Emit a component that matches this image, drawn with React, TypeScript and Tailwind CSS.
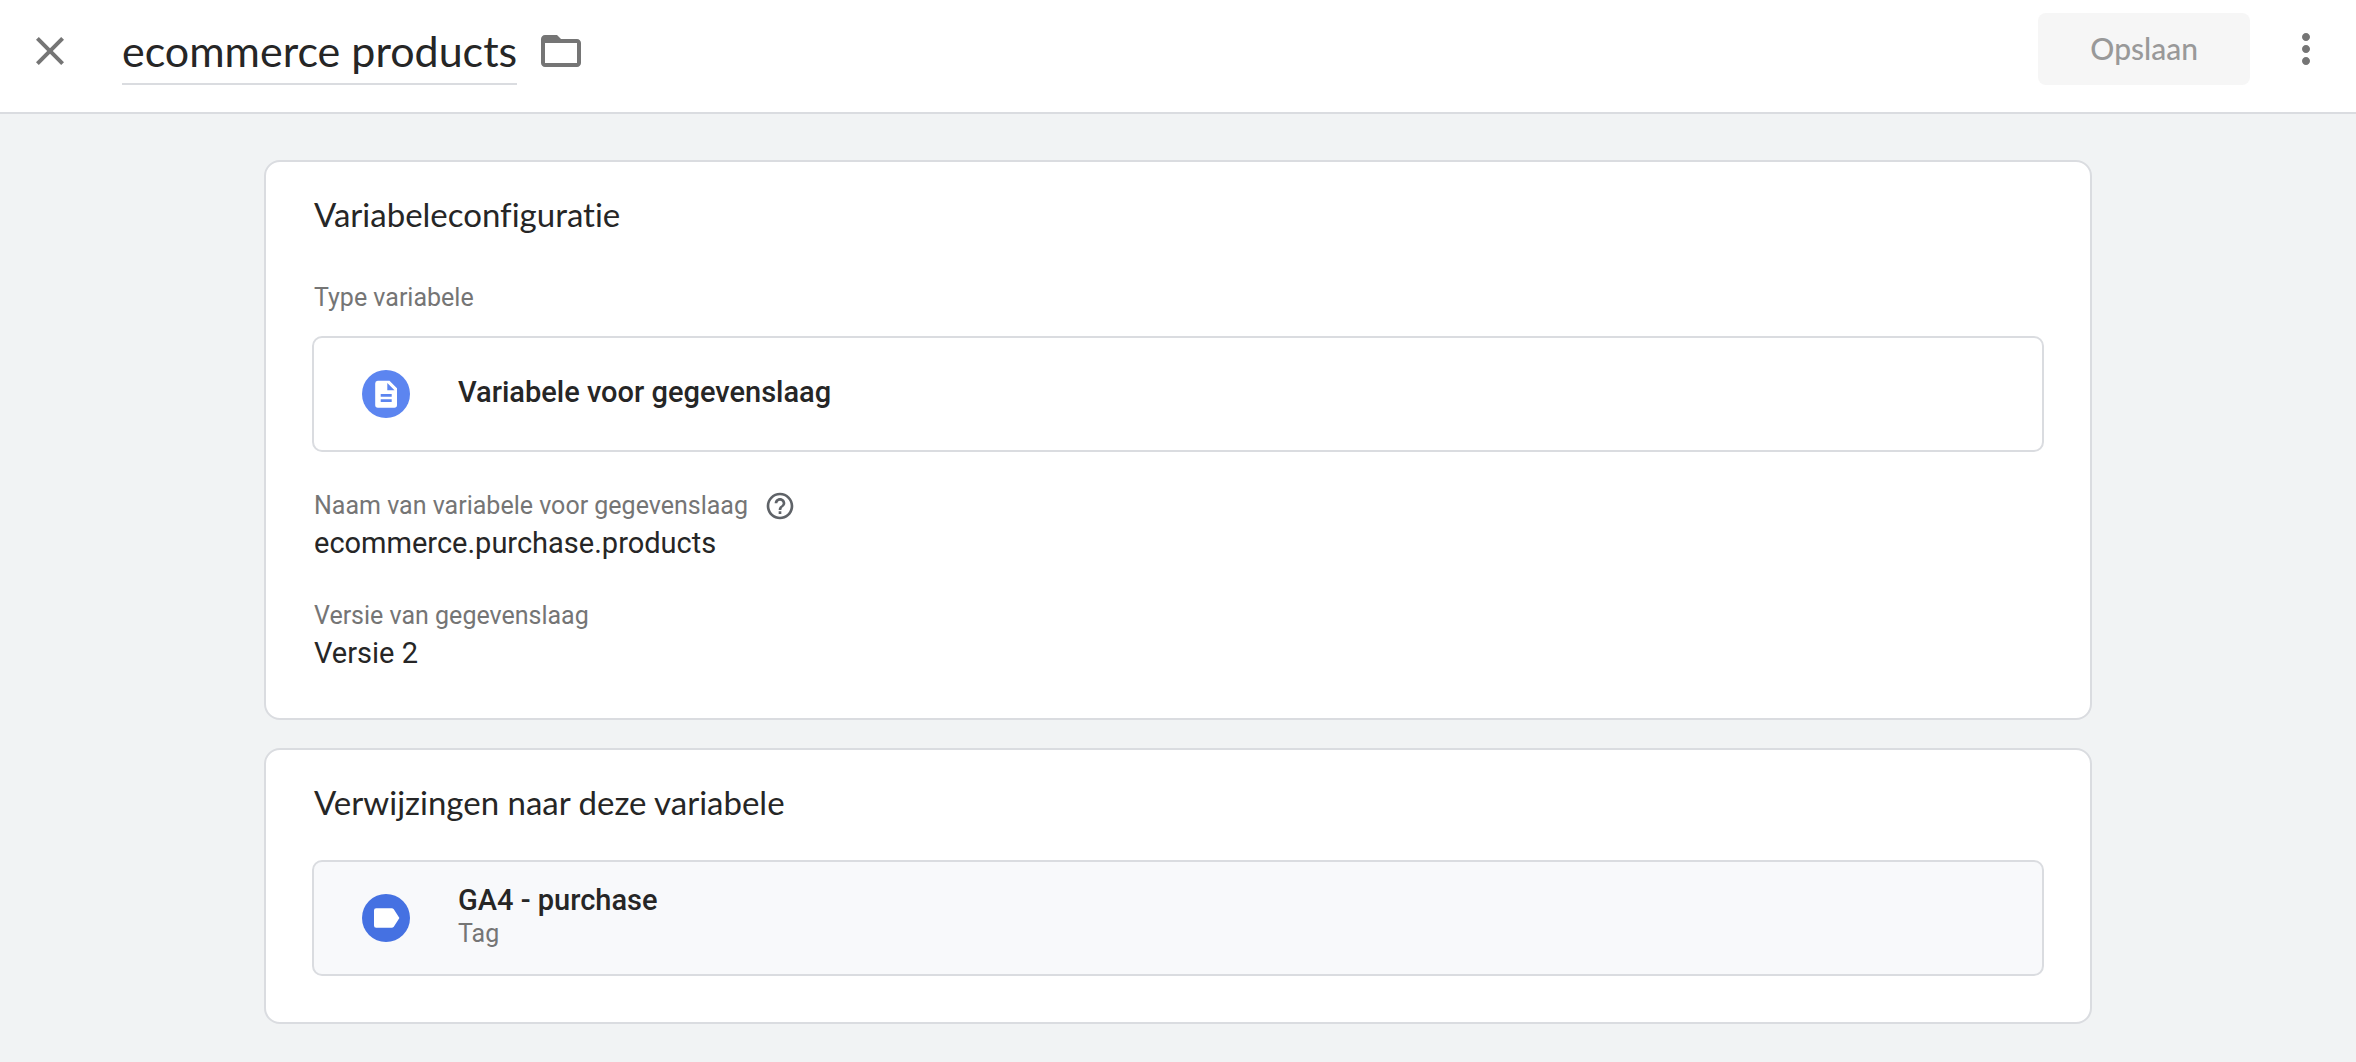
import { useState, type ReactNode } from 'react';

const CLOSE = 'M19 6.41L17.59 5 12 10.59 6.41 5 5 6.41 10.59 12 5 17.59 6.41 19 12 13.41 17.59 19 19 17.59 13.41 12z';
const FOLDER =
  'M20 6h-8l-2-2H4c-1.1 0-1.99.9-1.99 2L2 18c0 1.1.9 2 2 2h16c1.1 0 2-.9 2-2V8c0-1.1-.9-2-2-2zm0 12H4V8h16v10z';
const MORE =
  'M12 8c1.1 0 2-.9 2-2s-.9-2-2-2-2 .9-2 2 .9 2 2 2zm0 2c-1.1 0-2 .9-2 2s.9 2 2 2 2-.9 2-2-.9-2-2-2zm0 6c-1.1 0-2 .9-2 2s.9 2 2 2 2-.9 2-2-.9-2-2-2z';
const HELP =
  'M11 18h2v-2h-2v2zm1-16C6.48 2 2 6.48 2 12s4.48 10 10 10 10-4.48 10-10S17.52 2 12 2zm0 18c-4.41 0-8-3.59-8-8s3.59-8 8-8 8 3.59 8 8-3.59 8-8 8zm0-14c-2.21 0-4 1.79-4 4h2c0-1.1.9-2 2-2s2 .9 2 2c0 2-3 1.75-3 5h2c0-2.25 3-2.5 3-5 0-2.21-1.79-4-4-4z';

function Icon({ path, className }: { path: string; className: string }) {
  return (
    <svg viewBox="0 0 24 24" fill="currentColor" aria-hidden="true" className={className}>
      <path d={path} />
    </svg>
  );
}

function DocumentBadge() {
  return (
    <svg viewBox="0 0 48 48" aria-hidden="true" className="size-12 shrink-0">
      <circle cx="24" cy="24" r="24" fill="#5c85f0" />
      <path
        d="M15.7 10.7h11.8l7.5 7.5v16.9a2.7 2.7 0 0 1-2.7 2.7H15.9a2.7 2.7 0 0 1-2.7-2.7V13.4a2.7 2.7 0 0 1 2.5-2.7z"
        fill="#fff"
      />
      <path d="M25.3 13v7.2h7.2zM18.7 24h11v2.7h-11zM18.7 29.3h11V32h-11z" fill="#5c85f0" />
    </svg>
  );
}

function TagBadge() {
  return (
    <svg viewBox="0 0 48 48" aria-hidden="true" className="size-12 shrink-0">
      <circle cx="24" cy="24" r="24" fill="#4571e2" />
      <path
        d="M14.4 14.2h15.2c.9 0 1.7.4 2.2 1.1l5.6 8.7-5.6 8.7c-.5.7-1.3 1.1-2.2 1.1H14.4a2.3 2.3 0 0 1-2.4-2.4V16.6a2.3 2.3 0 0 1 2.4-2.4z"
        fill="#fff"
      />
    </svg>
  );
}

function Card({ title, children }: { title: string; children: ReactNode }) {
  return (
    <section className="rounded-2xl border-2 border-[#dadce0] bg-white px-[46px] pt-[30px] pb-[46px]">
      <h2 className="px-0.5 font-[Lato,sans-serif] text-[33px] leading-11 [font-variant-ligatures:none]">{title}</h2>
      {children}
    </section>
  );
}

function Field({ label, value, help }: { label: string; value: string; help?: boolean }) {
  return (
    <div className="px-0.5">
      <dt className="flex items-center gap-4 text-[25px] leading-9 text-[#757575]">
        {label}
        {help && (
          <button type="button" aria-label="Help" className="text-[#5f6368]">
            <Icon path={HELP} className="size-8" />
          </button>
        )}
      </dt>
      <dd className="text-[29px] leading-[38px]">{value}</dd>
    </div>
  );
}

export default function App() {
  const [name, setName] = useState('ecommerce products');
  return (
    <div className="min-h-screen bg-[#f1f3f4] font-[Roboto,sans-serif] text-[#262626]">
      <header className="flex items-center justify-between border-b-2 border-[#dadce0] bg-white px-[26px] pt-3 pb-[27px]">
        <div className="flex items-center pt-[5px]">
          <button type="button" aria-label="Sluiten" className="mr-12 text-[#757575]">
            <Icon path={CLOSE} className="size-12" />
          </button>
          <input
            aria-label="Naam van variabele"
            value={name}
            onChange={(e) => setName(e.target.value)}
            className="field-sizing-content h-[68px] border-b-2 border-[#dadce0] font-[Lato,sans-serif] text-[43px] outline-none"
          />
          <button type="button" aria-label="Map" className="ml-5 text-[#757575]">
            <Icon path={FOLDER} className="size-12" />
          </button>
        </div>
        <div className="flex items-center gap-8">
          <button
            type="button"
            disabled
            className="h-[72px] rounded-lg bg-[#f6f6f6] px-[52px] font-[Lato,sans-serif] text-[30px] font-medium text-[#999999]"
          >
            Opslaan
          </button>
          <button type="button" aria-label="Meer acties" className="text-[#757575]">
            <Icon path={MORE} className="size-12" />
          </button>
        </div>
      </header>

      <main className="mx-auto flex max-w-[1828px] flex-col gap-7 py-[46px]">
        <Card title="Variabeleconfiguratie">
          <p className="mt-11 px-0.5 text-[25px] leading-9 text-[#757575]">Type variabele</p>
          <button
            type="button"
            className="mt-5 flex h-[116px] w-full items-center gap-12 rounded-[10px] border-2 border-[#dadce0] bg-white px-12 text-left"
          >
            <DocumentBadge />
            <span className="pb-1 text-[29px] leading-9 font-medium">Variabele voor gegevenslaag</span>
          </button>
          <dl className="mt-9 flex flex-col gap-9">
            <Field label="Naam van variabele voor gegevenslaag" value="ecommerce.purchase.products" help />
            <Field label="Versie van gegevenslaag" value="Versie 2" />
          </dl>
        </Card>

        <Card title="Verwijzingen naar deze variabele">
          <a
            href="#ga4-purchase"
            className="mt-9 flex h-[116px] items-center gap-12 rounded-[10px] border-2 border-[#dadce0] bg-[#f8f9fb] px-12"
          >
            <TagBadge />
            <span className="flex flex-col pb-1">
              <span className="text-[29px] leading-9 font-medium">GA4 - purchase</span>
              <span className="text-[25px] leading-8 text-[#757575]">Tag</span>
            </span>
          </a>
        </Card>
      </main>
    </div>
  );
}
